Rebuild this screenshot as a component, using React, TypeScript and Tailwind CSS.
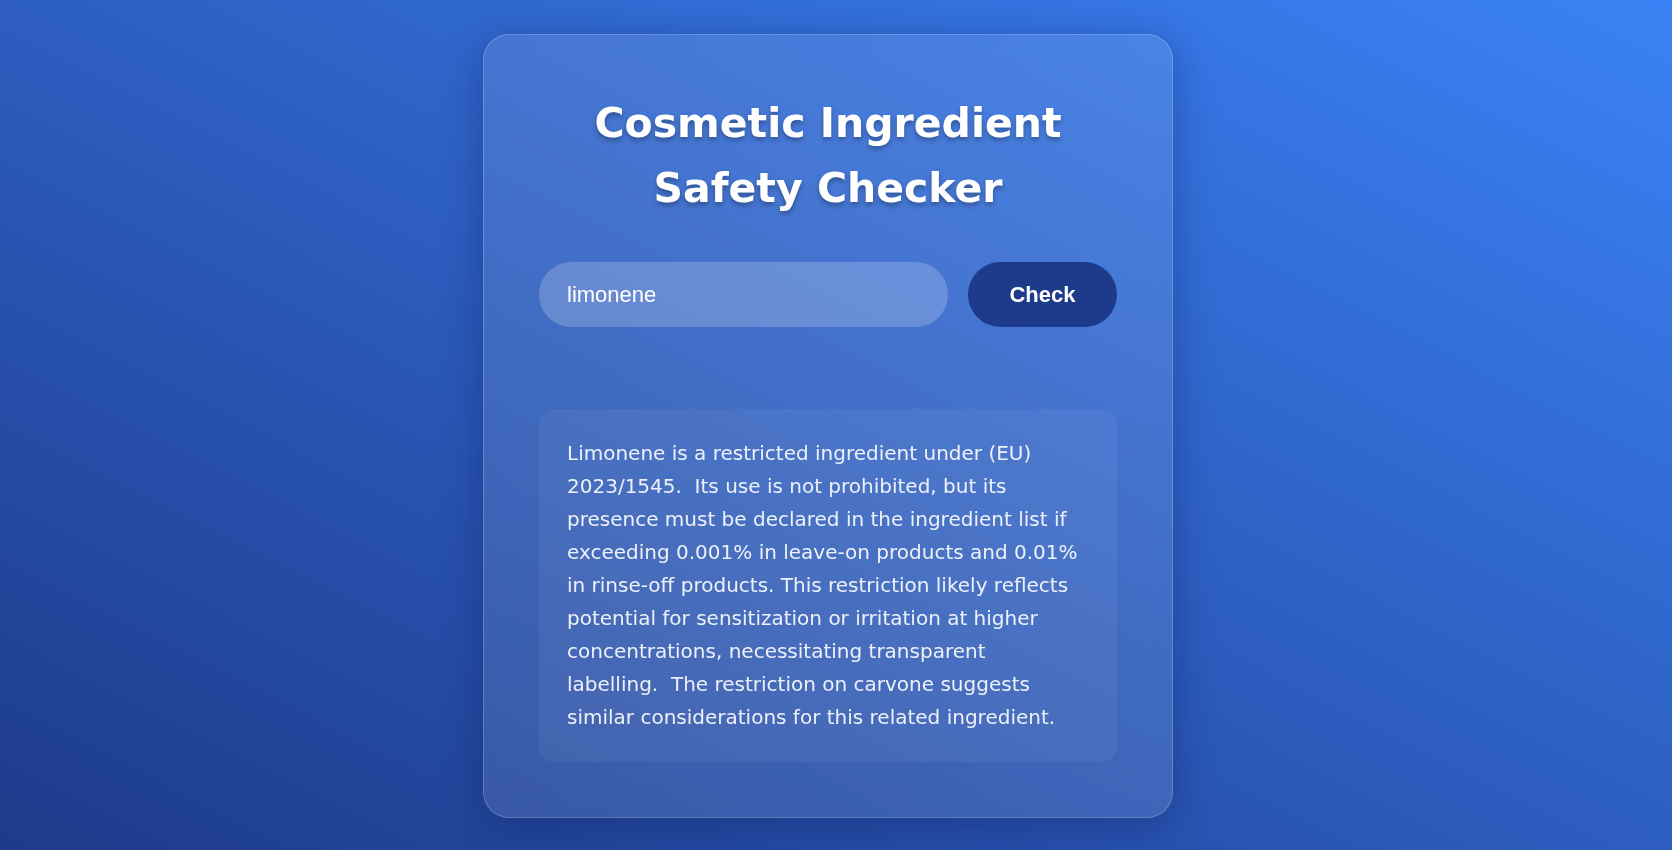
import { useState } from "react";

const RESULT = [
  "Limonene is a restricted ingredient under (EU)",
  "2023/1545.  Its use is not prohibited, but its",
  "presence must be declared in the ingredient list if",
  "exceeding 0.001% in leave-on products and 0.01%",
  "in rinse-off products. This restriction likely reflects",
  "potential for sensitization or irritation at higher",
  "concentrations, necessitating transparent",
  "labelling.  The restriction on carvone suggests",
  "similar considerations for this related ingredient.",
].join("\n");

export default function App() {
  const [query, setQuery] = useState("limonene");

  return (
    <div className="min-h-screen w-full flex items-center justify-center pr-4 pt-[2px] bg-[linear-gradient(to_top_right,#1e3a8a,#3b82f6)] font-['DejaVu_Sans',sans-serif]">
      <div className="w-[690px] rounded-[26px] border border-white/20 bg-white/10 backdrop-blur-md px-[55px] pt-[56px] pb-[55px] shadow-[0_8px_40px_rgba(10,20,80,0.35)]">
        <h1 className="text-center text-white font-bold text-[41px] leading-[65px] [text-shadow:0_3px_5px_rgba(0,0,0,0.3)]">
          Cosmetic Ingredient Safety Checker
        </h1>

        <form
          className="mt-[41px] flex items-center gap-[20px]"
          onSubmit={(e) => e.preventDefault()}
        >
          <input
            value={query}
            onChange={(e) => setQuery(e.target.value)}
            className="flex-1 min-w-0 h-[65px] rounded-full bg-white/20 pl-[28px] pr-5 text-[22px] text-white font-['Liberation_Sans',Arial,sans-serif] outline-none placeholder:text-white/70"
          />
          <button
            type="submit"
            className="w-[149px] h-[65px] rounded-full bg-[#1e3a8a] text-white text-[22px] font-bold font-['Liberation_Sans',Arial,sans-serif]"
          >
            Check
          </button>
        </form>

        <div className="mt-[82px] rounded-2xl bg-white/5 p-7">
          <p className="whitespace-pre text-[20px] leading-[33px] text-white/90">
            {RESULT}
          </p>
        </div>
      </div>
    </div>
  );
}
